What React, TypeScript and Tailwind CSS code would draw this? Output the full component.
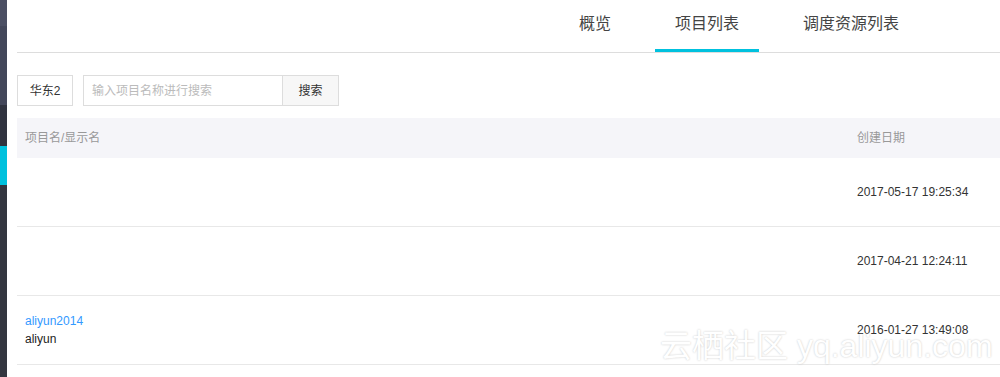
export default function App() {
  const rows = [
    { name: "", display: "", date: "2017-05-17 19:25:34" },
    { name: "", display: "", date: "2017-04-21 12:24:11" },
    { name: "aliyun2014", display: "aliyun", date: "2016-01-27 13:49:08" },
  ];

  return (
    <div
      className="relative flex h-[377px] w-[1000px] overflow-hidden bg-white text-[12px] text-[#333]"
      style={{ fontFamily: '"Liberation Sans", "Noto Sans CJK SC", sans-serif' }}
    >
      {/* Sidebar strip */}
      <div className="flex w-[7px] shrink-0 flex-col">
        <div className="h-[26px] bg-[#4b4f63]" />
        <div className="h-[79px] bg-[#43475a]" />
        <div className="h-[41px] bg-[#30333f]" />
        <div className="h-[39px] bg-[#00c1de]" />
        <div className="flex-1 bg-[#333640]" />
      </div>

      <div className="flex flex-1 flex-col pl-[10px]">
        {/* Tabs */}
        <div className="flex h-[53px] justify-end gap-6 border-b border-[#dddddd] pr-[81px]">
          <div className="flex items-center px-5 pb-[4px] text-[16px] text-[#444]">概览</div>
          <div className="flex items-center border-b-[3px] border-[#00c1de] px-5 pb-[1px] text-[16px] text-[#444]">
            项目列表
          </div>
          <div className="flex items-center px-5 pb-[4px] text-[16px] text-[#444]">调度资源列表</div>
        </div>

        {/* Filter */}
        <div className="mt-[22px] flex h-[31px] items-stretch">
          <div className="flex w-[56px] items-center justify-center border border-[#dddddd]">华东2</div>
          <div className="ml-[10px] flex w-[200px] items-center border border-[#dddddd] pl-2 text-[#bbbbbb]">
            输入项目名称进行搜索
          </div>
          <div className="flex w-[56px] items-center justify-center border border-l-0 border-[#dddddd] bg-[#f7f7f7]">
            搜索
          </div>
        </div>

        {/* Table */}
        <div className="mt-[12px] flex flex-col">
          <div className="flex h-[40px] items-center bg-[#f5f5f9] text-[#999]">
            <div className="flex-1 pl-2">项目名/显示名</div>
            <div className="w-[151px] pl-2">创建日期</div>
          </div>
          {rows.map((r, i) => (
            <div key={i} className="flex h-[69px] items-center border-b border-[#e8e8e8]">
              <div className="flex flex-1 flex-col pl-2 leading-[18px]">
                <span className="h-[18px] text-[#3399ff]">{r.name}</span>
                <span className="h-[18px] text-[#222]">{r.display}</span>
              </div>
              <div className="w-[151px] pl-2 text-[#333]">{r.date}</div>
            </div>
          ))}
        </div>
      </div>

      {/* Watermark */}
      <div className="pointer-events-none absolute left-[660px] top-[326px] whitespace-nowrap text-[32px] leading-[40px] text-white [text-shadow:0_0_2px_#c4c4c4]">
        云栖社区 yq.aliyun.com
      </div>
    </div>
  );
}
